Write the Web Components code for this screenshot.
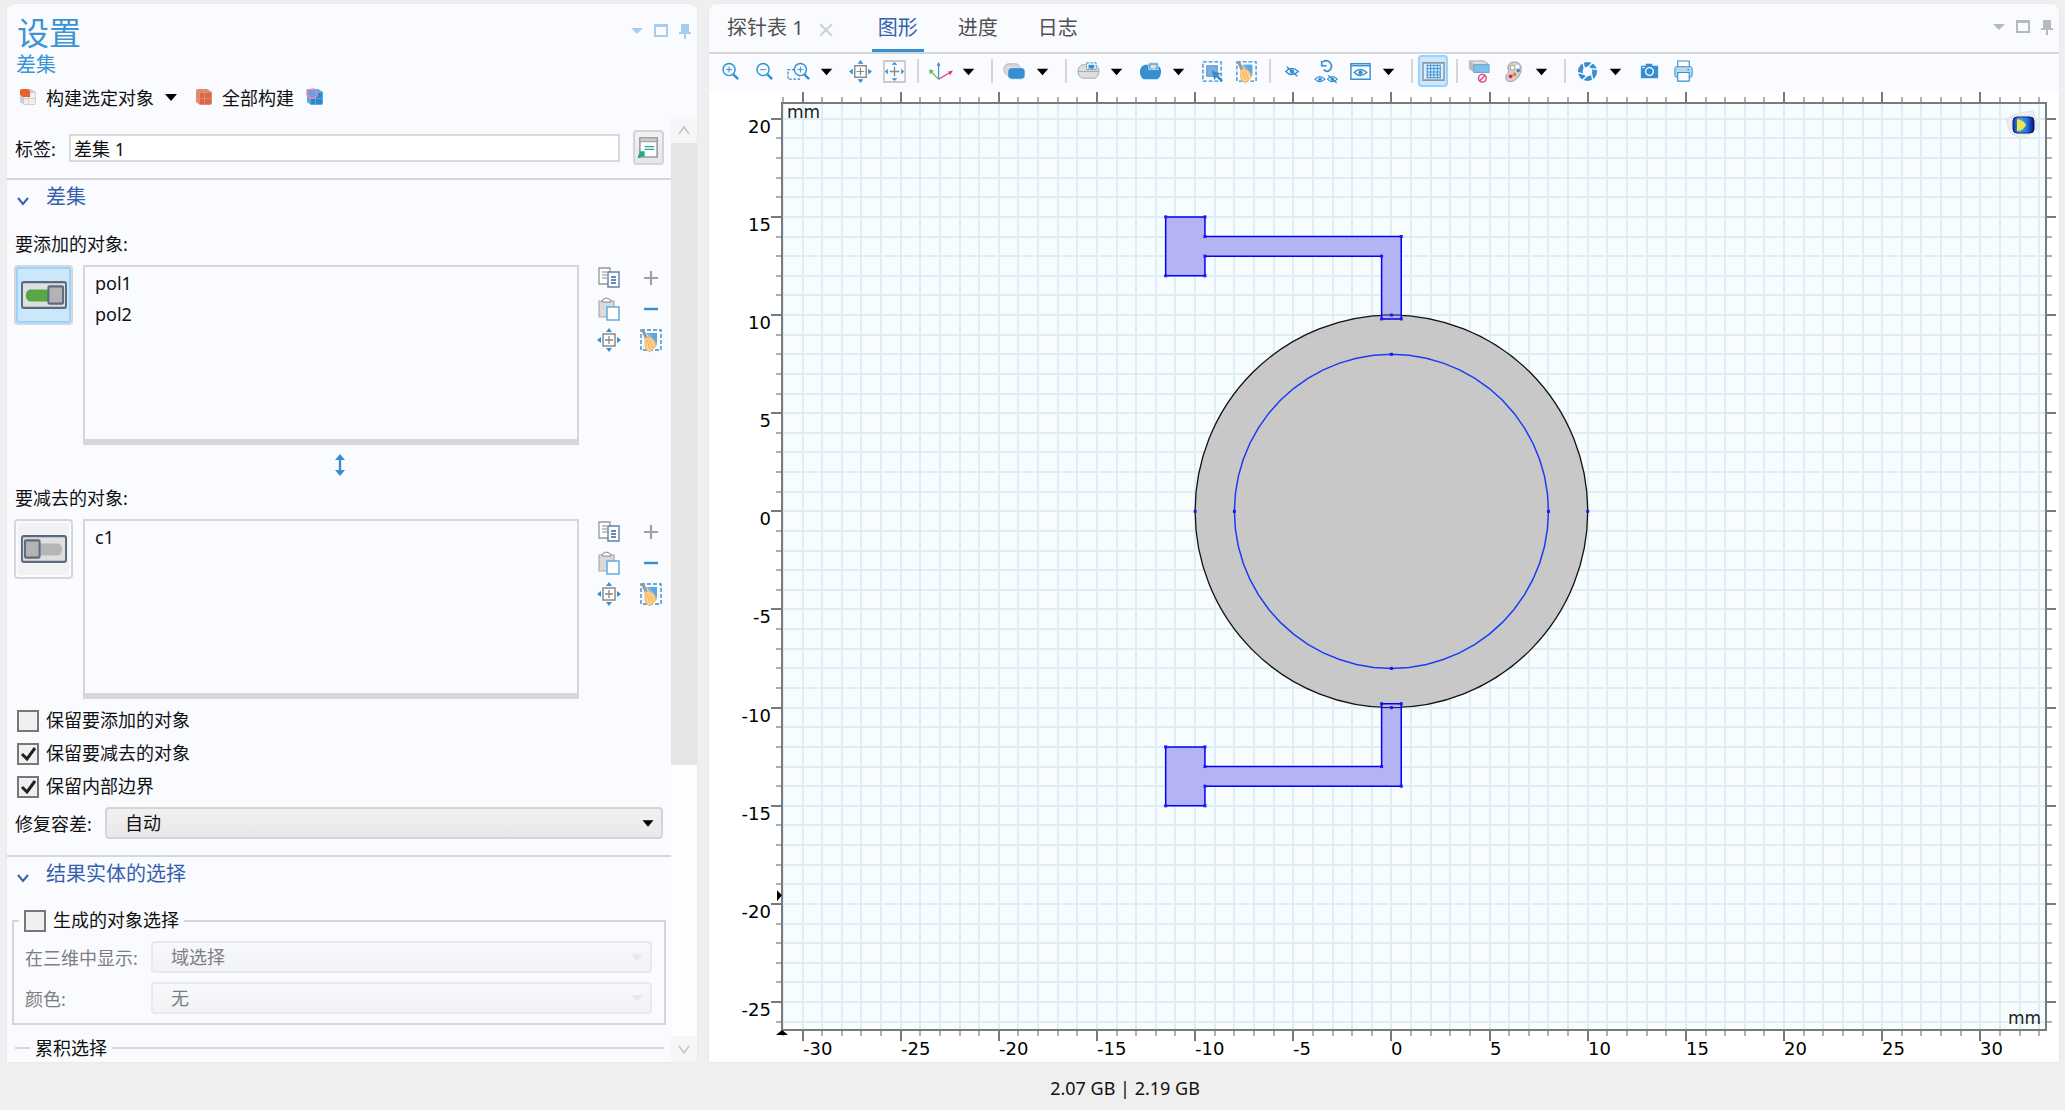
<!DOCTYPE html>
<html lang="zh-CN">
<head>
<meta charset="UTF-8">
<title>设置</title>
<style>
    body {
        margin: 0;
        background: #efefef;
        color: #111;
        font-family: "Noto Sans", "Noto Sans CJK SC", sans-serif;
        font-size: 18px;
    }
</style>
</head>
<body>
<app-window></app-window>

<script>
const BLUE = '#358fd0';

const broom = `
    <rect x="2" y="2" width="20" height="20" fill="none" stroke="${BLUE}" stroke-width="1.4" stroke-dasharray="4 2"/>
    <path d="M7 5h11v12h-3z" fill="#7cbcea"/><path d="M10 5h8v10z" fill="#5aa8df"/>
    <path d="M2 2l3-1 4 9-3 1z" fill="#999"/>
    <path d="M6 10l4-1q6 2 7 9l-6 6q-4-2-5-5z" fill="#ffd08a" stroke="#e8a850" stroke-width=".8"/>
    <path d="M8 12l3 9M10 11l4 9" stroke="#eda94a" stroke-width=".8"/>`;

const eye = `<path d="M0 5q6-6.500 13 0-7 6.500-13 0z" fill="none" stroke="${BLUE}" stroke-width="1.5"/><circle cx="6.500" cy="5" r="2.3" fill="${BLUE}"/>`;
const hiddenEye = eye + `<path d="M1 0l11 10" stroke="${BLUE}" stroke-width="1.6"/>`;

const blocks = (light, dark) => `
    <path d="M4 6q0-2 2-2h9l5 3v11q0 2-2 2H8l-4-3z" fill="${light}"/>
    <path d="M8 8h4v5H8zM13 8h6v5h-6zM8 14h4v5H8zM13 14h6v5h-6z" fill="${dark}"/>`;

const ICONS = {
    down: '<path d="M6 9h12l-6 7z" fill="#000"/>',
    'pane-menu': '<path d="M6 9h12l-6 6z" fill="currentColor"/>',
    'pane-max': '<path d="M5 5h14v13H5zM7 8v8h10V8z" fill="currentColor" fill-rule="evenodd"/>',
    'pane-pin': '<path d="M8 5h8v8h2v2h-5v5h-2v-5H6v-2h2z" fill="currentColor"/>',
    chevron: '<path d="M7 9l5 6 5-6" fill="none" stroke="#3561ac" stroke-width="2"/>',
    'build-selected': blocks('#cfcfcf', '#eee') + '<path d="M4 6q0-2 2-2h6l2 2v6H7l-3-2z" fill="#ea6130"/>',
    'build-all': blocks('#e08b70', '#dc6747'),
    'build-mesh': blocks('#5aa9e0', '#2f86cc') + '<path d="M4 5l7-1 3 3v4l-3 2H7l-3-3z" fill="#6f9fd6" stroke="#ec86b4" stroke-width="1.4"/>',
    form: `<path d="M3 2h18v20H3z" fill="#fff" stroke="#999" stroke-width="1.6"/><path d="M3 2h18v4H3z" fill="#ccc" stroke="#999"/>
        <path d="M8 11h10M8 14h10" stroke="#2aa88c" stroke-width="1.3"/><path d="M1 23q0-4 2-5l-1-2h6v6l-2-1q-2 0-3 2z" fill="#22a78c"/>`,
    copy: `<path d="M2 2h11v16H2z" fill="#fff" stroke="#999" stroke-width="1.3"/><path d="M5 6h5M5 9h5M5 12h5" stroke="#888" stroke-width="1.2"/>
        <path d="M11 6h11v15H11z" fill="#fff" stroke="#5d81ab" stroke-width="1.4"/><path d="M14 11h5M14 14h5M14 17h5" stroke="#3763a0" stroke-width="1.6"/>`,
    paste: `<path d="M2 4h15v16H2z" fill="#dadada" stroke="#aaa" stroke-width="1.2"/><path d="M5 5q0-3 2-3 2-2 5 0 2 0 2 3z" fill="#fff" stroke="#888"/>
        <path d="M10 10h12v13H10z" fill="#fff" stroke="#62abe0" stroke-width="1.5"/>`,
    extents: `<path d="M6 6h12v12H6z" fill="#fff" stroke="#8b8b8b" stroke-width="1.5"/><path d="M12 8v8M8 12h8" stroke="#888" stroke-width="1.3"/>
        <path d="M12 0l3 4H9zM12 24l3-4H9zM0 12l4-3v6zM24 12l-4-3v6z" fill="${BLUE}"/>`,
    'extents-sel': `<path d="M1 1h22v22H1z" fill="none" stroke="#bbb" stroke-width="1.4"/><path d="M12 7v10M7 12h10" stroke="#888" stroke-width="1.4"/>
        <path d="M12 2l3 3H9zM12 22l3-3H9zM2 12l3-3v6zM22 12l-3-3v6z" fill="${BLUE}"/>`,
    plus: '<path d="M12 5v14M5 12h14" stroke="#a0a0a0" stroke-width="2.2"/>',
    minus: `<path d="M5 12h14" stroke="${BLUE}" stroke-width="2.4"/>`,
    broom,
    'zoom-in': `<circle cx="10.5" cy="10" r="6.3" fill="#f4faff" stroke="${BLUE}" stroke-width="1.5"/><path d="M15 15l5 5" stroke="${BLUE}" stroke-width="2.5"/><path d="M10.5 7v6M7.5 10h6" stroke="${BLUE}"/>`,
    'zoom-out': `<circle cx="10.5" cy="10" r="6.3" fill="#f4faff" stroke="${BLUE}" stroke-width="1.5"/><path d="M15 15l5 5" stroke="${BLUE}" stroke-width="2.5"/><path d="M7.5 10h6" stroke="${BLUE}"/>`,
    'zoom-box': `<path d="M8 10H1v10h12v-3" fill="none" stroke="${BLUE}" stroke-width="1.3" stroke-dasharray="3 1.5"/><circle cx="14" cy="10" r="6.3" fill="#f4faff" stroke="${BLUE}" stroke-width="1.5"/><path d="M18 15l5 5" stroke="${BLUE}" stroke-width="2.5"/><path d="M14 7v6M11 10h6" stroke="${BLUE}"/>`,
    axes: `<path d="M10 20V4" stroke="${BLUE}" stroke-width="1.2"/><path d="M10 2l2 4H8z" fill="${BLUE}"/><path d="M10 20l-8-8" stroke="#63b958" stroke-width="1.2"/><path d="M0 10l5 1-4 4z" fill="#63b958"/><path d="M10 20l12-7" stroke="#dc3670" stroke-width="1.2"/><path d="M25 11l-3 5-2-4z" fill="#dc3670"/>`,
    scene: `<rect x="1" y="4" width="17" height="12" rx="5" fill="#d8d8d8" stroke="#b5b5b5"/><rect x="5" y="8" width="18" height="12" rx="4" fill="${BLUE}" stroke="#fff" stroke-width=".6"/>`,
    'select-box': `<path d="M5 5h14q4 2 4 7t-4 7H5q-4-2-4-7t4-7z" fill="#dedede" stroke="#aaa"/><path d="M1 12h22" stroke="#aaa"/><path d="M10 3h10v7H10z" fill="#fff" stroke="${BLUE}" stroke-dasharray="3 1"/><path d="M12 5h6v4h-6z" fill="${BLUE}"/>`,
    'select-solid': `<path d="M6 5h13q4 3 4 7 0 6-4 8H5q-4-2-4-8 0-5 5-7z" fill="${BLUE}"/><path d="M10 3h10v7H10z" fill="#5aa8df" stroke="#d4eafa" stroke-dasharray="3 1"/><path d="M12 5h6v4h-6z" fill="#ddd"/>`,
    'select-area': `<path d="M2 2h19v20H2z" fill="none" stroke="${BLUE}" stroke-width="1.4" stroke-dasharray="4 2"/><path d="M6 6h11v11H6z" fill="#82ade0" stroke="#5990cb"/><path d="M11 11l10 3-3 2 5 5-2 2-5-5-2 3z" fill="${BLUE}"/>`,
    hide: `<g transform="translate(5 7)">${hiddenEye}</g>`,
    'reset-hide': `<path d="M8 2q5-3 8 1t-1 8q-3 2-6-1M7 1v5h5" fill="none" stroke="${BLUE}" stroke-width="1.7"/><g transform="translate(0 16) scale(.8)">${eye}</g><g transform="translate(13 16) scale(.8)">${hiddenEye}</g>`,
    'view-eye': `<path d="M2 4h20v16H2z" fill="#fff" stroke="${BLUE}" stroke-width="1.5"/><path d="M2 6h20" stroke="${BLUE}" stroke-width="1.5"/><g transform="translate(5.5 8)">${eye}</g>`,
    grid: `<path d="M1 3h22v18H1z" fill="#dbeefb" stroke="#8b98a3" stroke-width="1.6"/><path d="M5.5 5v14M9 5v14M12.500 5v14M16 5v14M19 5v14M5 5.500h14.500M5 9h14.500M5 12.500h14.500M5 15.500h14.500M5 18.500h14.500" stroke="${BLUE}"/>`,
    'clip-off': `<path d="M1 1h16l5 4H6z" fill="#ddd" stroke="#aaa"/><path d="M1 1v8l5 4V5z" fill="#bbb"/><path d="M6 5h16v8H6z" fill="#82c0ec" stroke="#5aa6db"/><circle cx="15" cy="19" r="4" fill="#fff" stroke="#e0427a" stroke-width="1.5"/><path d="M12 22l6-6" stroke="#e0427a" stroke-width="1.5"/>`,
    palette: `<path d="M12 2q8 0 8 7 0 8-8 13-8 2-8-4 0-3 2-4 2-2 0-5 0-6 6-7z" fill="#d4d0ce" stroke="#999"/><circle cx="11" cy="8" r="2.5" fill="#fff" stroke="#999"/><circle cx="16" cy="7" r="2" fill="#fff"/><circle cx="17" cy="11" r="1.8" fill="${BLUE}"/><circle cx="13" cy="15" r="2" fill="#f08030"/><circle cx="9" cy="17" r="2" fill="#dd2058"/>`,
    shutter: `<circle cx="12" cy="12" r="7.500" fill="none" stroke="${BLUE}" stroke-width="5"/>
        <path d="M7 1l2 9M18 2l-6 6M23 10l-8-1M18 23l-2-9M6 22l6-6M1 13l8 2" stroke="#fafbff" stroke-width="1.5"/>`,
    camera: `<path d="M3 6h5V4h7v2h6v13H3z" fill="${BLUE}"/><circle cx="12" cy="12" r="4" fill="${BLUE}" stroke="#fff" stroke-width="1.4"/><path d="M4 8h3" stroke="#fff"/>`,
    print: `<path d="M6 1h12v7H6z" fill="#fff" stroke="${BLUE}" stroke-width="1.2"/><rect x="3" y="7" width="18" height="11" rx="2" fill="#bad8ef" stroke="${BLUE}"/><path d="M6 13h12v9H6z" fill="#fff" stroke="${BLUE}" stroke-width="1.2"/><circle cx="17" cy="10" r="1" fill="${BLUE}"/>`,
    close: '<path d="M5 5l14 14M19 5L5 19" stroke="#cdd1d7" stroke-width="2.5"/>',
    resize: `<path d="M12 3v18" stroke="${BLUE}" stroke-width="2.4"/><path d="M12 1l5 6H7zM12 23l5-6H7z" fill="${BLUE}"/>`,
    'rail-up': '<path d="M7 16l5-7 5 7" fill="none" stroke="#c5c7c9" stroke-width="1.6"/>',
    'rail-down': '<path d="M7 9l5 7 5-7" fill="none" stroke="#c5c7c9" stroke-width="1.6"/>'
};

class UiIcon extends HTMLElement {
    connectedCallback() {
        this.attachShadow({ mode: 'open' }).innerHTML = `
            <style>
                :host { display: block; width: 24px; height: 24px; flex: none; }
                svg { display: block; width: 100%; height: 100%; overflow: visible; }
            </style>
            <svg viewBox="0 0 24 24" aria-hidden="true">${ICONS[this.getAttribute('name')]}</svg>
        `;
    }
}
customElements.define('ui-icon', UiIcon);

class PaneControls extends HTMLElement {
    connectedCallback() {
        this.attachShadow({ mode: 'open' }).innerHTML = `
            <style>
                :host { display: flex; }
                button { width: 24px; height: 24px; padding: 0; border: 0; background: none; color: inherit; }
            </style>
            <button aria-label="菜单"><ui-icon name="pane-menu"></ui-icon></button>
            <button aria-label="最大化"><ui-icon name="pane-max"></ui-icon></button>
            <button aria-label="固定"><ui-icon name="pane-pin"></ui-icon></button>
        `;
    }
}
customElements.define('pane-controls', PaneControls);

class CheckOption extends HTMLElement {
    connectedCallback() {
        this.attachShadow({ mode: 'open' }).innerHTML = `
            <style>
                :host { display: block; }
                label { display: flex; align-items: center; gap: 7px; line-height: 24px; }
                .box { display: grid; }
                .text { padding-bottom: 2px; line-height: 22px; }
                input, svg { grid-area: 1 / 1; width: 22px; height: 22px; margin: 0; box-sizing: border-box; }
                input { appearance: none; border: 2px solid #777; background: #f0f0f0; }
                svg { visibility: hidden; pointer-events: none; }
                input:checked + svg { visibility: visible; }
            </style>
            <label>
                <span class="box">
                    <input type="checkbox" ${this.hasAttribute('checked') ? 'checked' : ''}>
                    <svg viewBox="0 0 22 22"><path d="M5 11l5 5 8-11" fill="none" stroke="#222" stroke-width="3"/></svg>
                </span>
                <span class="text"><slot></slot></span>
            </label>
        `;
    }
}
customElements.define('check-option', CheckOption);

class ChoiceRow extends HTMLElement {
    connectedCallback() {
        const disabled = this.hasAttribute('disabled') ? 'disabled' : '';
        this.attachShadow({ mode: 'open' }).innerHTML = `
            <style>
                :host { display: flex; align-items: center; }
                :host([disabled]) { color: #7d7e80; }
                label { width: var(--label-width, 90px); flex: none; }
                .field { flex: 1; display: grid; align-items: center; }
                select, ui-icon { grid-area: 1 / 1; }
                select {
                    appearance: none; width: 100%; height: 32px; padding: 0 18px; box-sizing: border-box;
                    border: 2px solid #d4d5d7; border-radius: 4px;
                    background: linear-gradient(#f1f1f2, #e8e8e8);
                    font: inherit; color: inherit;
                }
                select:disabled { opacity: 1; border-color: #e8e9eb; background: linear-gradient(#f7f8fb, #f2f3f5); }
                ui-icon { width: 22px; height: 22px; justify-self: end; margin-right: 4px; pointer-events: none; }
                :host([disabled]) ui-icon { opacity: .05; }
            </style>
            <label for="choice">${this.getAttribute('label')}</label>
            <div class="field">
                <select id="choice" ${disabled}><option>${this.getAttribute('value')}</option></select>
                <ui-icon name="down"></ui-icon>
            </div>
        `;
    }
}
customElements.define('choice-row', ChoiceRow);

class SettingsSection extends HTMLElement {
    connectedCallback() {
        this.attachShadow({ mode: 'open' }).innerHTML = `
            <style>
                :host { display: block; border-top: 2px solid #d5d6d8; }
                h2 {
                    display: flex; align-items: center; gap: 11px;
                    height: 36px; margin: 0; padding-left: 4px;
                    font-size: 20px; font-weight: 400; color: #3561ac;
                }
                h2 span { padding-bottom: 3px; line-height: 28px; }
                ui-icon { padding-top: 6px; box-sizing: border-box; height: 30px; }
            </style>
            <h2><ui-icon name="chevron"></ui-icon><span>${this.getAttribute('heading')}</span></h2>
            <slot></slot>
        `;
    }
}
customElements.define('settings-section', SettingsSection);

class ObjectPicker extends HTMLElement {
    connectedCallback() {
        const on = this.hasAttribute('active');
        const items = this.getAttribute('items').split(',');
        const knob = on
            ? '<path d="M28 8v11H9q-4-1-4-5.500T9 8z" fill="#55a845"/><rect x="28" y="5" width="15" height="16" rx="1" fill="#b3b3b3" stroke="#5c6a80" stroke-width="2"/>'
            : '<path d="M19 8v11h19q4-1 4-5.500T38 8z" fill="#b5b6b6"/><rect x="4" y="5" width="15" height="16" rx="1" fill="#b3b3b3" stroke="#5c6a80" stroke-width="2"/>';
        const tools = [['copy', '复制'], ['plus', '添加'], ['paste', '粘贴'], ['minus', '移除'], ['extents', '缩放到选择'], ['broom', '清除选择']];
        this.attachShadow({ mode: 'open' }).innerHTML = `
            <style>
                :host { display: block; }
                h3 { margin: 0 0 6px; padding-left: 8px; font-size: 18px; font-weight: 400; line-height: 29px; }
                .row { display: flex; align-items: flex-start; padding: 0 7px; }
                .toggle {
                    display: grid; place-items: center; width: 59px; height: 60px; padding: 0;
                    border: 2px solid #d6d7d9; border-radius: 4px; background: #f2f2f4;
                    box-shadow: inset 0 0 0 2px #fafbff;
                }
                .toggle.on { background: #cce6fa; box-shadow: inset 0 0 0 2px #99d1ff; }
                ul {
                    flex: 1; height: 180px; margin: 0 17px 0 10px; padding: 1px 10px; box-sizing: border-box;
                    list-style: none; border: 2px solid #d5d6d8; border-bottom-width: 6px;
                }
                li { line-height: 31px; }
                .tools { display: grid; grid-template-columns: 26px 26px; gap: 5px 16px; }
                .tools button { width: 26px; height: 26px; padding: 1px; border: 0; background: none; }
            </style>
            <h3>${this.getAttribute('label')}</h3>
            <div class="row">
                <button class="toggle ${on ? 'on' : ''}" aria-label="激活选择" aria-pressed="${on}">
                    <svg width="46" height="28" viewBox="0 0 47 26" preserveAspectRatio="none">
                        <rect x="1" y="1" width="45" height="24" rx="2" fill="#dedfdf" stroke="#5c6a80" stroke-width="2"/>${knob}
                    </svg>
                </button>
                <ul>${items.map(item => `<li>${item}</li>`).join('')}</ul>
                <div class="tools">
                    ${tools.map(([icon, name]) => `<button aria-label="${name}"><ui-icon name="${icon}"></ui-icon></button>`).join('')}
                </div>
            </div>
        `;
    }
}
customElements.define('object-picker', ObjectPicker);

class ScrollRail extends HTMLElement {
    connectedCallback() {
        this.attachShadow({ mode: 'open' }).innerHTML = `
            <style>
                :host { display: flex; flex-direction: column; background: #fcfdff; }
                button { height: 26px; padding: 0 1px; border: 0; background: #f5f6f8; flex: none; }
                .thumb { flex: 622; background: #e4e5e7; }
                .rest { flex: 271; }
            </style>
            <button aria-label="向上滚动"><ui-icon name="rail-up"></ui-icon></button>
            <div class="thumb"></div>
            <div class="rest"></div>
            <button aria-label="向下滚动"><ui-icon name="rail-down"></ui-icon></button>
        `;
    }
}
customElements.define('scroll-rail', ScrollRail);

class SettingsPane extends HTMLElement {
    connectedCallback() {
        this.attachShadow({ mode: 'open' }).innerHTML = `
            <style>
                :host { display: flex; flex-direction: column; background: #fafbff; border-radius: 8px 8px 0 0; box-shadow: 0 0 0 1px #e9eaeb; }
                header { display: flex; justify-content: space-between; padding-top: 8px; color: #3d93d4; }
                h1 { margin: 0; padding-left: 10px; font-size: 32px; line-height: 42px; font-weight: 400; }
                p { margin: 0; padding-left: 9px; font-size: 20px; line-height: 22px; }
                pane-controls { padding-top: 7px; color: #a9cdec; }
                .build { display: flex; align-items: center; height: 40px; padding: 1px 0 0 9px; }
                .build button {
                    display: flex; align-items: center; gap: 6px; padding: 0; border: 0;
                    background: none; font: inherit; color: inherit;
                }
                .build .more { margin: 0 9px 0 5px; }
                .build .mesh { margin-left: 9px; }
                .body { flex: 1; display: flex; }
                .content { flex: 1; min-width: 0; padding-bottom: 2px; }
                scroll-rail { width: 26px; }
                .name { display: flex; align-items: center; height: 61px; padding: 0 7px 0 8px; }
                .name label { width: 54px; }
                .name input {
                    flex: 1; min-width: 0; height: 28px; padding: 0 3px; box-sizing: border-box;
                    border: 2px solid #d9dadb; background: #fff; font: inherit; color: inherit;
                }
                .name button {
                    width: 31px; height: 35px; margin-left: 13px; padding: 2px;
                    border: 2px solid #d3d4d5; border-radius: 4px; background: linear-gradient(#f2f2f2, #e6e6e6);
                }
                .name ui-icon { width: 23px; height: 23px; }
                object-picker { padding-top: 14px; }
                .resize { display: flex; justify-content: center; align-items: center; height: 39px; padding-left: 2px; }
                .resize + object-picker { padding-top: 0; }
                .options { display: grid; grid-auto-rows: 33px; align-items: center; padding: 5px 10px 0; }
                .tolerance { height: 40px; margin: 0 8px 12px; }
                fieldset { min-width: 0; margin: 16px 5px 0; padding: 8px 12px 9px 11px; border: 2px solid #d5d6d8; }
                fieldset choice-row { --label-width: 126px; }
                fieldset choice-row + choice-row { margin-top: 9px; }
                legend { margin-left: -6px; padding: 0 5px; line-height: 24px; }
                .cumulative { margin: 11px 7px 0 8px; padding: 0 0 0 15px; border-width: 2px 0 0; }
                .cumulative legend { margin: 0; }
            </style>
            <header>
                <div><h1>设置</h1><p>差集</p></div>
                <pane-controls></pane-controls>
            </header>
            <div class="build">
                <button><ui-icon name="build-selected"></ui-icon><span>构建选定对象</span></button>
                <button class="more" aria-label="更多"><ui-icon name="down"></ui-icon></button>
                <button><ui-icon name="build-all"></ui-icon><span>全部构建</span></button>
                <button class="mesh" aria-label="构建网格"><ui-icon name="build-mesh"></ui-icon></button>
            </div>
            <div class="body">
                <div class="content">
                    <div class="name">
                        <label for="name">标签:</label>
                        <input id="name" type="text" value="差集 1">
                        <button aria-label="重命名"><ui-icon name="form"></ui-icon></button>
                    </div>
                    <settings-section heading="差集">
                        <object-picker label="要添加的对象:" items="pol1,pol2" active></object-picker>
                        <div class="resize"><ui-icon name="resize"></ui-icon></div>
                        <object-picker label="要减去的对象:" items="c1"></object-picker>
                        <div class="options">
                            <check-option>保留要添加的对象</check-option>
                            <check-option checked>保留要减去的对象</check-option>
                            <check-option checked>保留内部边界</check-option>
                        </div>
                        <choice-row class="tolerance" label="修复容差:" value="自动"></choice-row>
                    </settings-section>
                    <settings-section heading="结果实体的选择">
                        <fieldset>
                            <legend><check-option>生成的对象选择</check-option></legend>
                            <choice-row label="在三维中显示:" value="域选择" disabled></choice-row>
                            <choice-row label="颜色:" value="无" disabled></choice-row>
                        </fieldset>
                        <fieldset class="cumulative"><legend>累积选择</legend></fieldset>
                    </settings-section>
                </div>
                <scroll-rail></scroll-rail>
            </div>
        `;
    }
}
customElements.define('settings-pane', SettingsPane);

class ViewTabs extends HTMLElement {
    connectedCallback() {
        this.attachShadow({ mode: 'open' }).innerHTML = `
            <style>
                :host { display: flex; height: 48px; padding-left: 12px; border-bottom: 2px solid #d5d6da; }
                nav { flex: 1; display: flex; gap: 28px; }
                .tab { display: flex; }
                .tab > button:first-child {
                    padding: 2px 6px 0; border: 0; border-bottom: 3px solid transparent; background: none;
                    font: inherit; font-size: 20px; line-height: 42px; color: #505050;
                }
                .tab > button[aria-selected=true] { border-color: ${BLUE}; color: #3561ac; }
                .close { width: 34px; padding: 0 8px 0 6px; border: 0; background: none; }
                .close ui-icon { width: 20px; height: 20px; padding-top: 3px; }
                pane-controls { padding-top: 11px; color: #b7babd; }
            </style>
            <nav role="tablist">
                <div class="tab"><button role="tab">探针表 1</button><button class="close" aria-label="关闭"><ui-icon name="close"></ui-icon></button></div>
                <div class="tab"><button role="tab" aria-selected="true">图形</button></div>
                <div class="tab"><button role="tab">进度</button></div>
                <div class="tab"><button role="tab">日志</button></div>
            </nav>
            <pane-controls></pane-controls>
        `;
    }
}
customElements.define('view-tabs', ViewTabs);

class ViewToolbar extends HTMLElement {
    connectedCallback() {
        // "|" is a separator, "v" a drop-down arrow
        const tools = 'zoom-in zoom-out zoom-box v extents extents-sel | axes v | scene v | select-box v select-solid v select-area broom | hide reset-hide view-eye v | grid | clip-off palette v | shutter v camera print';
        this.attachShadow({ mode: 'open' }).innerHTML = `
            <style>
                :host { display: flex; align-items: center; height: 34px; padding: 0 0 4px 4px; }
                button { display: grid; place-items: center; width: 34px; height: 32px; padding: 0; border: 0; background: none; flex: none; }
                .more { width: 28px; padding-right: 6px; }
                .pressed { border: 2px solid #99d1ff; border-radius: 4px; background: #cce6fa; width: 30px; margin: 0 2px 0 1px; }
                i { width: 2px; height: 24px; margin: 0 4px 0 6px; background: #d5d6d8; flex: none; }
                ui-icon { width: 23px; height: 23px; }
            </style>
            ${tools.split(' ').map(tool => {
                if (tool === '|') return '<i></i>';
                if (tool === 'v') return '<button class="more" aria-label="更多"><ui-icon name="down"></ui-icon></button>';
                return `<button class="${tool === 'grid' ? 'pressed' : ''}" aria-label="${tool}"><ui-icon name="${tool}"></ui-icon></button>`;
            }).join('')}
        `;
    }
}
customElements.define('view-toolbar', ViewToolbar);

class GeometryPlot extends HTMLElement {
    constructor() {
        super();
        this.attachShadow({ mode: 'open' });
    }

    connectedCallback() {
        this.shadowRoot.innerHTML = `
            <style>
                :host { display: block; min-height: 0; height: 0; overflow: hidden; background: #fff; }
                svg { display: block; font-family: "DejaVu Sans", sans-serif; font-size: 18px; }
            </style>
            <svg role="img" aria-label="几何图形"></svg>
        `;
        this.draw();
        new ResizeObserver(() => this.draw()).observe(this);
    }

    draw() {
        const width = this.clientWidth;
        const height = this.clientHeight;
        const left = 73, top = 11;
        const right = width - 13, bottom = height - 32;
        const unit = 19.63;
        // world point shown in the middle of the frame, in mm
        const x = v => (left + right) / 2 + (v - 1.15) * unit;
        const y = v => (top + bottom) / 2 - (v + 2.81) * unit;
        let grid = '', ticks = '', major = '', labels = '';

        const first = Math.ceil(1.15 - (right - left) / 2 / unit);
        const last = Math.floor(1.15 + (right - left) / 2 / unit);
        for (let v = first; v <= last; v++) {
            const px = Math.round(x(v));
            grid += `M${px} ${top}V${bottom}`;
            if (v % 5) {
                ticks += `M${px} ${top - 6}V${top}M${px} ${bottom}v6`;
            } else {
                major += `M${px} 0V${top}M${px} ${bottom}v11`;
                labels += `<text x="${px}" y="${bottom + 25}">${v}</text>`;
            }
        }
        const low = Math.ceil(-2.81 - (bottom - top) / 2 / unit);
        const high = Math.floor(-2.81 + (bottom - top) / 2 / unit);
        for (let v = low; v <= high; v++) {
            const py = Math.round(y(v));
            grid += `M${left} ${py}H${right}`;
            if (v % 5) {
                ticks += `M${left - 6} ${py}H${left}M${right} ${py}h6`;
            } else {
                major += `M${left - 11} ${py}H${left}M${right} ${py}h10`;
                labels += `<text x="${left - 11}" y="${py + 14}" text-anchor="end">${v}</text>`;
            }
        }

        const feed = side => [[-11.5, 15], [-9.5, 15], [-9.5, 14], [.5, 14], [.5, 9.8], [-.5, 9.8], [-.5, 13], [-9.5, 13], [-9.5, 12], [-11.5, 12]]
            .map(([a, b]) => [x(a), y(b * side)]);
        const ring = Array.from({ length: 56 }, (_, i) => {
            const angle = i * Math.PI / 28;
            return `${x(8 * Math.sin(angle))},${y(8 * Math.cos(angle))}`;
        }).join(' ');
        const dots = [...feed(1), ...feed(-1),
            ...[8, 10].flatMap(r => [[r, 0], [-r, 0], [0, r], [0, -r]].map(([a, b]) => [x(a), y(b)]))];

        const svg = this.shadowRoot.querySelector('svg');
        svg.setAttribute('width', width);
        svg.setAttribute('height', height);
        svg.innerHTML = `
            <rect x="${left}" y="${top}" width="${right - left}" height="${bottom - top}" fill="#f7fdff"/>
            <path d="${grid}" stroke="#dfedf7" stroke-width="2"/>
            <path d="${ticks}" stroke="#b0b0b0" stroke-width="2"/>
            <path d="${major}" stroke="#7a7a7a" stroke-width="2"/>
            <rect x="${left}" y="${top}" width="${right - left}" height="${bottom - top}" fill="none" stroke="#7a7a7a" stroke-width="2"/>
            ${labels}
            <path d="M${left - 5} ${y(-19.4) - 2}l5 5-5 6zM${left - 6} ${bottom + 5}h12l-6-5z"/>
            <text x="${left + 5}" y="${top + 15}" font-size="17" fill="#222">mm</text>
            <text x="${right - 5}" y="${bottom - 6}" font-size="17" fill="#222" text-anchor="end">mm</text>
            <circle cx="${x(0)}" cy="${y(0)}" r="${10 * unit}" fill="#c8c8c8" stroke="#111" stroke-width="1.3"/>
            <g fill="#b4b4f2" stroke="#00f" stroke-width="1.5">
                <polygon points="${feed(1).join(' ')}"/>
                <polygon points="${feed(-1).join(' ')}"/>
            </g>
            <path d="M${x(-.5)} ${y(10)}H${x(.5)}M${x(-.5)} ${y(-10)}H${x(.5)}" stroke="#111"/>
            <polygon points="${ring}" fill="none" stroke="#1a3cf5" stroke-width="1.5"/>
            ${dots.map(([a, b]) => `<rect x="${a - 1.5}" y="${b - 1.5}" width="3" height="3" fill="#1818f0"/>`).join('')}
            <g transform="translate(${right - 41} 18)">
                <path d="M1 9l13-6 14-2 5 17-16 11-12-6z" fill="#eeeeef" stroke="#e2e2e2"/>
                <linearGradient id="logo"><stop offset="0" stop-color="#0c2fa5"/><stop offset=".3" stop-color="#3fa8e8"/><stop offset=".65" stop-color="#2778e0"/><stop offset="1" stop-color="#04107a"/></linearGradient>
                <rect x="8" y="7" width="21" height="16" rx="4" fill="url(#logo)" stroke="#0a1c80"/>
                <path d="M12 9q8 2 9 6-3 6-9 6z" fill="#f2e74a"/>
            </g>
        `;
    }
}
customElements.define('geometry-plot', GeometryPlot);

class AppWindow extends HTMLElement {
    connectedCallback() {
        this.attachShadow({ mode: 'open' }).innerHTML = `
            <style>
                :host { display: grid; grid-template-rows: 1fr 48px; min-height: 100vh; box-sizing: border-box; padding: 4px 6px 0 7px; }
                main { display: grid; grid-template-columns: 23fr 45fr; gap: 12px; }
                .view { display: flex; flex-direction: column; min-width: 0; background: #fafbff; border-radius: 8px 8px 0 0; box-shadow: 0 0 0 1px #e9eaeb; }
                geometry-plot { flex: 1; }
                footer { display: grid; place-items: center; padding: 4px 0 0 184px; }
            </style>
            <main>
                <settings-pane></settings-pane>
                <section class="view">
                    <view-tabs></view-tabs>
                    <view-toolbar></view-toolbar>
                    <geometry-plot></geometry-plot>
                </section>
            </main>
            <footer>2.07 GB | 2.19 GB</footer>
        `;
    }
}
customElements.define('app-window', AppWindow);
</script>
</body>
</html>
